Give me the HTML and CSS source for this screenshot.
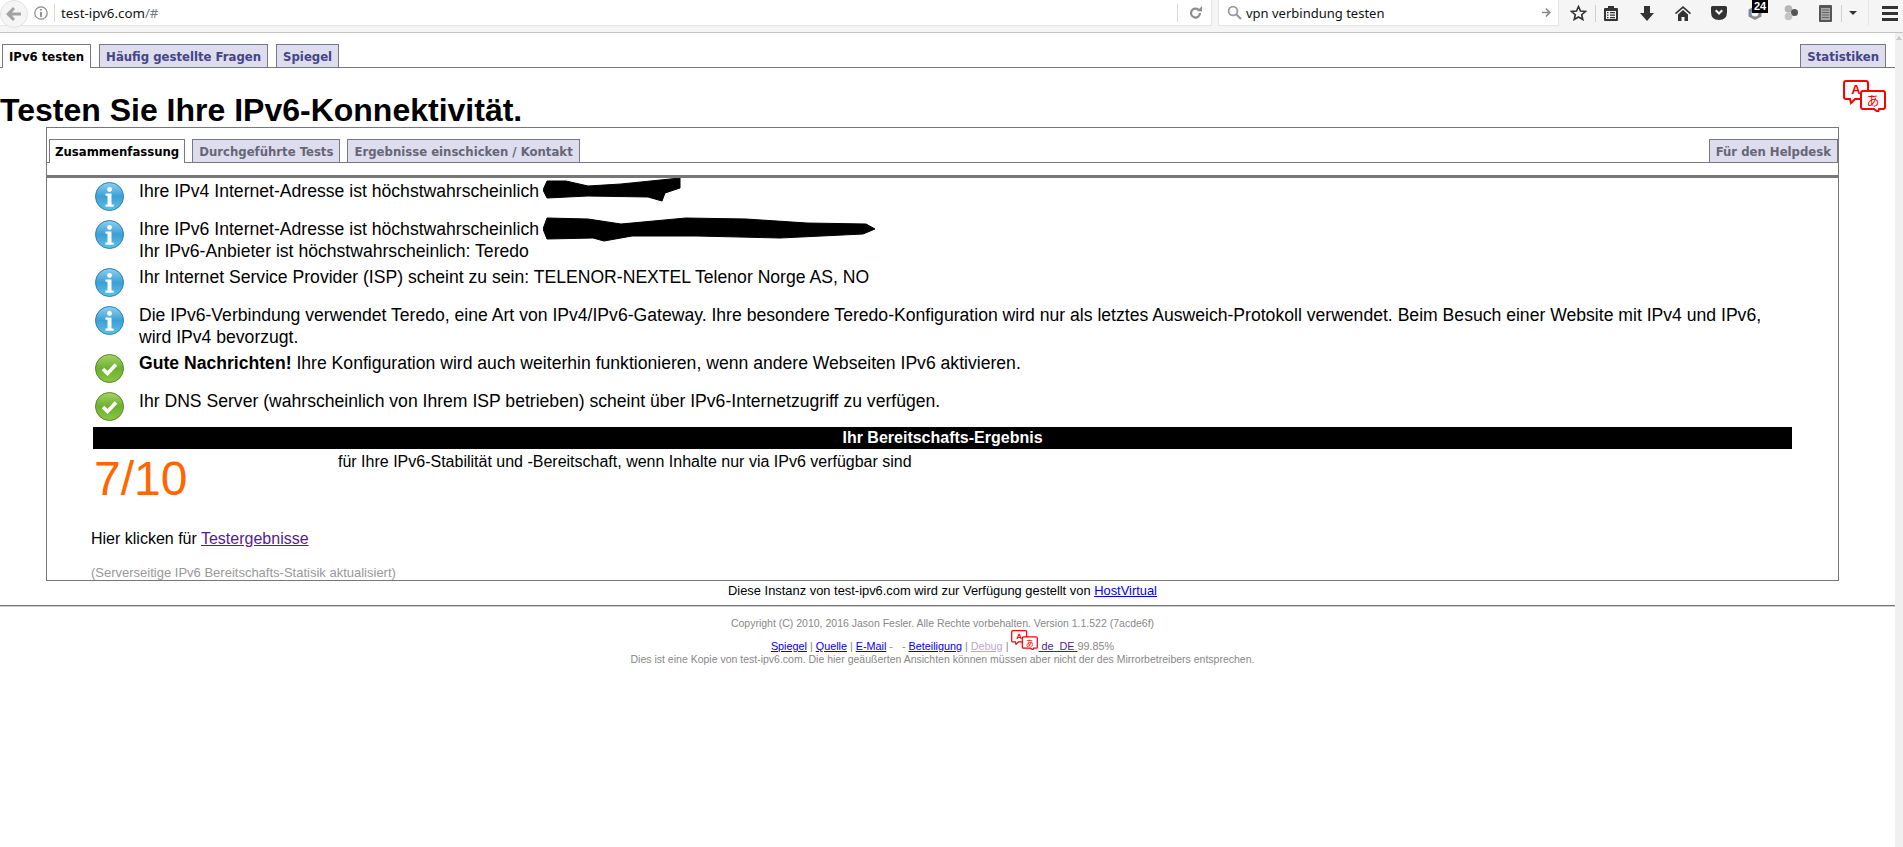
FILE: index.html
```html
<!DOCTYPE html>
<html lang="de">

<head>
    <meta charset="UTF-8">
    <title>Test your IPv6 connectivity.</title>
    <link rel="stylesheet" href="styles.css">
</head>

<body>
    <svg class="defs" width="0" height="0">
        <defs>
            <linearGradient id="blueFill" x1="0" y1="0" x2="0" y2="1">
                <stop offset="0" stop-color="#8fd0ef" />
                <stop offset="0.5" stop-color="#3ba0d6" />
                <stop offset="1" stop-color="#5fc0ea" />
            </linearGradient>
            <linearGradient id="greenFill" x1="0" y1="0" x2="0" y2="1">
                <stop offset="0" stop-color="#a6d468" />
                <stop offset="0.5" stop-color="#6db02f" />
                <stop offset="1" stop-color="#8cc63f" />
            </linearGradient>
            <symbol id="iconInfo" viewBox="0 0 29 29">
                <circle cx="14.5" cy="14.5" r="14" fill="url(#blueFill)" stroke="#2b7fae" />
                <circle cx="14.5" cy="7.5" r="2.4" fill="#fff" />
                <path d="M10.5 11.5h6v11h2.2v2.2H10.5v-2.2h2v-8.8h-2z" fill="#fff" />
            </symbol>
            <symbol id="iconOk" viewBox="0 0 29 29">
                <circle cx="14.5" cy="14.5" r="14" fill="url(#greenFill)" stroke="#55892a" />
                <path d="M8 15l4.5 4.5L21 10.5" fill="none" stroke="#fff" stroke-width="3.6" />
            </symbol>
            <symbol id="iconLang" viewBox="0 0 43 32">
                <path d="M3 1h20q2 0 2 2v14q0 2-2 2H12l-4 4-1-4H3q-2 0-2-2V3q0-2 2-2z" fill="#fff" stroke="#f00" stroke-width="2" />
                <text x="13" y="14" class="lang-a">A</text>
                <path d="M20 11h20q2 0 2 2v14q0 2-2 2h-4l-1 3-4-3H20q-2 0-2-2V13q0-2 2-2z" fill="#fff" stroke="#f00" stroke-width="2" />
                <text x="30" y="25" class="lang-b">あ</text>
            </symbol>
        </defs>
    </svg>

    <div class="toolbar">
        <div class="urlbar">
            <span class="backbtn">
                <svg width="16" height="14" viewBox="0 0 16 14">
                    <path d="M7 0l2 2-3 3.5h9v3H6L9 12l-2 2-7-7z" fill="#a3a3a3" />
                </svg>
            </span>
            <svg class="infobtn" width="14" height="14" viewBox="0 0 14 14">
                <circle cx="7" cy="7" r="6.2" fill="none" stroke="#8a8a8a" stroke-width="1.2" />
                <path d="M6.2 3h1.6v1.6H6.2zM6.2 6h1.6v5H6.2z" fill="#777" />
            </svg>
            <span class="urltext">test-ipv6.com<span class="urlrest">/#</span></span>
            <span class="reload">
                <svg width="14" height="14" viewBox="0 0 14 14">
                    <path d="M11 7a4.5 4.5 0 1 1-1.5-3.3" fill="none" stroke="#8c8c8c" stroke-width="2.2" />
                    <path d="M8 5l5 .5V0z" fill="#8c8c8c" />
                </svg>
            </span>
        </div>
        <div class="searchbar">
            <svg width="15" height="15" viewBox="0 0 15 15">
                <circle cx="6" cy="6" r="4.4" fill="none" stroke="#9a9a9a" stroke-width="1.8" />
                <path d="M9.5 9.5l4.5 4.5" stroke="#9a9a9a" stroke-width="2.2" />
            </svg>
            <span class="searchtext">vpn verbindung testen</span>
            <svg width="9" height="9" viewBox="0 0 9 9">
                <path d="M4.5 0l4.5 4.5L4.5 9 3.4 7.9 5.8 5.3H0V3.7h5.8L3.4 1.1z" fill="#8c8c8c" />
            </svg>
        </div>
        <div class="tools">
            <span class="tool tool-star">
                <svg width="17" height="16" viewBox="0 0 17 16">
                    <path d="M8.5 1.5l2 4.5 4.9.5-3.7 3.2 1.1 4.8-4.3-2.5-4.3 2.5 1.1-4.8L1.6 6.5 6.500 6z" fill="none" stroke="#333" stroke-width="1.6" />
                </svg>
            </span>
            <span class="toolsep"></span>
            <span class="tool tool-list">
                <svg width="14" height="15" viewBox="0 0 14 15">
                    <path d="M1 2h3V0h6v2h3q1 0 1 1v11q0 1-1 1H1q-1 0-1-1V3q0-1 1-1zm1 3v8h10V5zm1 1h1.500v1.300H3zm3 0h5v1.300H6zM3 8.500h1.500v1.300H3zm3 0h5v1.300H6zM3 11h1.500v1.300H3zm3 0h5v1.300H6z" fill="#333" fill-rule="evenodd" />
                </svg>
            </span>
            <span class="tool">
                <svg width="14" height="15" viewBox="0 0 14 15">
                    <path d="M4 0h6v7h4l-7 8-7-8h4z" fill="#333" />
                </svg>
            </span>
            <span class="tool">
                <svg width="16" height="15" viewBox="0 0 16 15">
                    <path d="M8 0l8 7-1 1.300-7-6-7 6L0 7zM8 4l5 4.500V15H9.500v-4h-3v4H3V8.500z" fill="#333" />
                </svg>
            </span>
            <span class="tool">
                <svg width="16" height="14" viewBox="0 0 16 14">
                    <path d="M1.500 0h13Q16 0 16 1.500V6q0 8-8 8T0 6V1.500Q0 0 1.500 0zM4 5l4 4 4-4-1.500-1.500L8 6 5.500 3.500z" fill="#333" fill-rule="evenodd" />
                </svg>
            </span>
            <span class="tool tool-sync">
                <svg width="16" height="16" viewBox="0 0 16 16">
                    <path d="M8 1l6.500 3.500v7L8 15l-6.500-3.500v-7z" fill="#8a8a8a" />
                    <circle cx="8" cy="8" r="3.500" fill="#f5f5f5" />
                    <path d="M3 9a5 5 0 0 1 5-5" fill="none" stroke="#3d9bd0" stroke-width="1.500" />
                </svg>
                <span class="badge">24</span>
            </span>
            <span class="tool">
                <svg width="14" height="16" viewBox="0 0 14 16">
                    <circle cx="4.500" cy="4" r="3.800" fill="#b5b5b5" />
                    <circle cx="10.500" cy="7.500" r="3.500" fill="#555" />
                    <circle cx="4.500" cy="11.500" r="3.800" fill="#c4c4c4" />
                </svg>
            </span>
            <span class="tool tool-phone">
                <svg width="13" height="17" viewBox="0 0 13 17">
                    <rect width="13" height="17" rx="1" fill="#555" />
                    <rect x="2" y="3" width="9" height="12" fill="#a8a8a8" />
                    <path d="M3 5h7M3 7.500h7M3 10h7M3 12.500h7" stroke="#666" />
                </svg>
            </span>
            <span class="toolsep"></span>
            <span class="tool tool-drop"><span class="caret"></span></span>
            <span class="toolsep toolsep-light"></span>
            <span class="burger">
                <span></span><span></span><span></span>
            </span>
        </div>
    </div>

    <div class="page">
        <div class="content">
            <div class="tabbar">
                <a class="tab tab-on">IPv6 testen</a>
                <a class="tab">Häufig gestellte Fragen</a>
                <a class="tab">Spiegel</a>
                <a class="tab tab-end">Statistiken</a>
            </div>

            <div class="headrow">
                <h1>Testen Sie Ihre IPv6-Konnektivität.</h1>
                <svg class="langbig" width="43" height="32"><use href="#iconLang" /></svg>
            </div>

            <div class="mainbox">
                <div class="tabbar tabbar-inner">
                    <a class="tab tab-on">Zusammenfassung</a>
                    <a class="tab">Durchgeführte Tests</a>
                    <a class="tab">Ergebnisse einschicken / Kontakt</a>
                    <a class="tab tab-end">Für den Helpdesk</a>
                </div>
                <div class="rule"></div>

                <div class="msg">
                    <svg class="msgicon" width="29" height="29"><use href="#iconInfo" /></svg>
                    <div>Ihre IPv4 Internet-Adresse ist höchstwahrscheinlich <span class="redact">
                        <svg class="blob" width="138" height="24" viewBox="0 0 138 24">
                            <path d="M4 3L23 3 45 8 78 6 137 0 137 10 122 15 119 23 105 19 45 18 4 20 0 12z" fill="#000" stroke="#000" stroke-linejoin="round" />
                        </svg></span></div>
                </div>
                <div class="msg">
                    <svg class="msgicon" width="29" height="29"><use href="#iconInfo" /></svg>
                    <div>Ihre IPv6 Internet-Adresse ist höchstwahrscheinlich <span class="redact">
                        <svg class="blob" width="333" height="26" viewBox="0 0 333 26">
                            <path d="M4 2L45 3 78 8 143 2 203 3 264 7 323 8 332 13 320 18 237 22 154 20 89 20 61 25 50 22 4 23 0 13z" fill="#000" stroke="#000" stroke-linejoin="round" />
                        </svg></span><br>Ihr IPv6-Anbieter ist höchstwahrscheinlich: Teredo</div>
                </div>
                <div class="msg">
                    <svg class="msgicon" width="29" height="29"><use href="#iconInfo" /></svg>
                    <div>Ihr Internet Service Provider (ISP) scheint zu sein: TELENOR-NEXTEL Telenor Norge AS, NO</div>
                </div>
                <div class="msg">
                    <svg class="msgicon" width="29" height="29"><use href="#iconInfo" /></svg>
                    <div>Die IPv6-Verbindung verwendet Teredo, eine Art von IPv4/IPv6-Gateway. Ihre besondere Teredo-Konfiguration wird nur als letztes Ausweich-Protokoll verwendet. Beim Besuch einer Website mit IPv4 und IPv6, wird IPv4 bevorzugt.</div>
                </div>
                <div class="msg">
                    <svg class="msgicon" width="29" height="29"><use href="#iconOk" /></svg>
                    <div><b>Gute Nachrichten!</b> Ihre Konfiguration wird auch weiterhin funktionieren, wenn andere Webseiten IPv6 aktivieren.</div>
                </div>
                <div class="msg">
                    <svg class="msgicon" width="29" height="29"><use href="#iconOk" /></svg>
                    <div>Ihr DNS Server (wahrscheinlich von Ihrem ISP betrieben) scheint über IPv6-Internetzugriff zu verfügen.</div>
                </div>

                <div class="scorebar">Ihr Bereitschafts-Ergebnis</div>
                <div class="scorerow">
                    <div class="score">7/10</div>
                    <div class="scoretext">für Ihre IPv6-Stabilität und -Bereitschaft, wenn Inhalte nur via IPv6 verfügbar sind</div>
                </div>
                <p class="clickline">Hier klicken für <a class="visited" href="#">Testergebnisse</a></p>
                <p class="statline">(Serverseitige IPv6 Bereitschafts-Statisik aktualisiert)</p>
            </div>

            <div class="sponsor">Diese Instanz von test-ipv6.com wird zur Verfügung gestellt von <a href="#">HostVirtual</a></div>
            <hr class="foothr">

            <div class="footer">
                <div class="copy">Copyright (C) 2010, 2016 Jason Fesler. Alle Rechte vorbehalten. Version 1.1.522 (7acde6f)</div>
                <div class="footlinks">
                    <a href="#">Spiegel</a> | <a href="#">Quelle</a> | <a href="#">E-Mail</a> - &nbsp; - <a href="#">Beteiligung</a> | <a class="faded" href="#">Debug</a> |
                    <svg class="langsmall" width="27" height="20"><use href="#iconLang" /></svg><a class="visited" href="#">&nbsp;de_DE&nbsp;</a>99.85%
                </div>
                <div class="disclaimer">Dies ist eine Kopie von test-ipv6.com. Die hier geäußerten Ansichten können müssen aber nicht der des Mirrorbetreibers entsprechen.</div>
            </div>
        </div>

        <div class="scrollbar">
            <span class="scrollup"></span>
        </div>
    </div>
</body>

</html>
```

FILE: styles.css
```css
html,
body {
    margin: 0;
    padding: 0;
    height: 847px;
    overflow: hidden;
    background: #fff;
    color: #000;
    font-family: "Liberation Sans", Arial, sans-serif;
}

.defs {
    position: absolute;
}

.lang-a {
    font-family: "Liberation Sans", sans-serif;
    font-size: 13px;
    font-weight: bold;
    fill: #f00;
    text-anchor: middle;
}

.lang-b {
    font-family: "Noto Sans CJK JP", sans-serif;
    font-size: 13px;
    fill: #f00;
    text-anchor: middle;
}

/* browser chrome */
.toolbar {
    display: flex;
    height: 32px;
    background: #f5f5f5;
    border-bottom: 1px solid #c4c4c4;
    box-sizing: content-box;
}

.urlbar {
    display: flex;
    align-items: center;
    width: 1212px;
    height: 26px;
    background: #fff;
    border-bottom: 1px solid #e4e4e4;
    border-right: 1px solid #e4e4e4;
    box-sizing: border-box;
}

.backbtn {
    display: flex;
    align-items: center;
    justify-content: center;
    width: 28px;
    height: 28px;
    margin-top: 2px;
    border-radius: 50%;
    background: #f5f5f5;
    border: 1px solid #e2e2e2;
    box-sizing: border-box;
    flex: none;
}

.infobtn {
    margin-left: 6px;
}

.urltext {
    margin-left: 6px;
    padding-left: 6px;
    border-left: 1px solid #d8d8d8;
    font-family: "Noto Sans", sans-serif;
    font-size: 13.3px;
    line-height: 18px;
    color: #111;
}

.urlrest {
    color: #777;
}

.reload {
    display: flex;
    align-items: center;
    margin-left: auto;
    width: 34px;
    height: 18px;
    padding-left: 11px;
    border-left: 1px solid #d8d8d8;
    box-sizing: border-box;
}

.searchbar {
    display: flex;
    align-items: center;
    width: 341px;
    height: 26px;
    margin-left: 6px;
    padding: 0 7px 0 8px;
    background: #fff;
    border: 1px solid #e4e4e4;
    border-top: 0;
    box-sizing: border-box;
}

.searchtext {
    flex: 1;
    margin-left: 4px;
    font-family: "Noto Sans", sans-serif;
    font-size: 13px;
    color: #111;
}

.tools {
    display: flex;
    align-items: center;
    height: 26px;
    margin-left: 3px;
}

.tool {
    position: relative;
    display: flex;
    align-items: center;
    justify-content: center;
    width: 36px;
}

.tool-star {
    width: 33px;
}

.tool-list {
    width: 30px;
    margin-right: 3px;
}

.tool-phone {
    width: 32px;
}

.tool-drop {
    width: 22px;
}

.toolsep {
    width: 1px;
    height: 17px;
    background: #cfcfcf;
}

.toolsep-light {
    height: 26px;
    margin-left: 4px;
    background: #e6e6e6;
}

.caret {
    width: 0;
    height: 0;
    border-left: 4px solid transparent;
    border-right: 4px solid transparent;
    border-top: 4px solid #333;
}

.badge {
    position: absolute;
    left: 15px;
    top: -6px;
    width: 16px;
    height: 14px;
    background: #000;
    color: #fff;
    font-size: 11px;
    font-weight: bold;
    line-height: 14px;
    text-align: center;
}

.burger {
    display: flex;
    flex-direction: column;
    gap: 3px;
    width: 16px;
    margin-left: 13px;
}

.burger span {
    height: 3px;
    background: #333;
}

/* page */
.page {
    display: flex;
    height: 814px;
}

.content {
    width: 1895px;
    flex: none;
}

.scrollbar {
    width: 8px;
    background: #f0f0f0;
}

.scrollup {
    display: block;
    width: 0;
    margin: 3px auto 0;
    border-left: 3px solid transparent;
    border-right: 3px solid transparent;
    border-bottom: 4px solid #c8c8c8;
}

.tabbar {
    display: flex;
    gap: 8px;
    height: 23px;
    margin-top: 11px;
    padding-left: 2px;
    padding-right: 9px;
    border-bottom: 1px solid #778;
}

.tab {
    height: 23px;
    padding: 0 6px;
    background: #dde;
    border: 1px solid #778;
    border-bottom: 0;
    box-sizing: border-box;
    font-family: "DejaVu Sans", sans-serif;
    font-stretch: condensed;
    font-size: 13px;
    font-weight: bold;
    line-height: 23px;
    color: #448;
}

.tab-on {
    height: 24px;
    background: #fff;
    color: #000;
}

.tab-end {
    margin-left: auto;
}

.headrow {
    display: flex;
    justify-content: space-between;
    height: 59px;
}

h1 {
    margin: 24px 0 0;
    font-size: 32px;
    font-weight: bold;
    line-height: 37px;
}

.langbig {
    margin: 12px 9px 0 0;
}

.mainbox {
    width: 1793px;
    height: 454px;
    margin-left: 46px;
    border: 1px solid #777;
    box-sizing: border-box;
}

.tabbar-inner {
    margin-top: 11px;
    padding-right: 0;
    gap: 7px;
}

.tabbar-inner .tab {
    color: #667;
}

.tabbar-inner .tab-on {
    padding: 0 5px;
    color: #000;
}

.rule {
    height: 3px;
    margin-top: 12px;
    background: #777;
}

.msg {
    display: flex;
    min-height: 38px;
    padding: 2px 60px 2px 48px;
    box-sizing: border-box;
    font-size: 17.6px;
    line-height: 22px;
}

.msgicon {
    flex: none;
    margin: 2px 15px 0 0;
}

.redact {
    position: relative;
}

.blob {
    position: absolute;
    left: 4px;
    top: -3px;
}

.scorebar {
    height: 22px;
    margin: 1px 46px 0;
    background: #000;
    color: #fff;
    font-size: 16px;
    font-weight: bold;
    line-height: 22px;
    text-align: center;
}

.scorerow {
    display: flex;
    margin-left: 47px;
    padding-top: 2px;
}

.score {
    width: 244px;
    font-size: 48px;
    line-height: 56px;
    color: #f60;
}

.scoretext {
    font-size: 16px;
    line-height: 22px;
}

.clickline {
    margin: 21px 0 0 44px;
    font-size: 16px;
    line-height: 22px;
}

.statline {
    margin: 15px 0 0 44px;
    font-size: 13px;
    line-height: 15px;
    color: #999;
}

a {
    color: #00e;
}

a.visited {
    color: #551a8b;
}

a.faded {
    color: #bba8cc;
}

.sponsor {
    width: 1793px;
    margin-left: 46px;
    margin-top: 2px;
    font-size: 12.9px;
    line-height: 16px;
    text-align: center;
}

.foothr {
    height: 0;
    margin: 6px 0 0;
    border: 0;
    border-top: 1px solid #777;
    border-bottom: 1px solid #ccc;
}

.footer {
    width: 1793px;
    margin-left: 46px;
    font-size: 10.5px;
    text-align: center;
    color: #888;
}

.copy {
    margin-top: 10px;
    line-height: 13px;
}

.footlinks {
    margin-top: 8px;
    font-size: 10.8px;
    line-height: 13px;
    color: #888;
}

.langsmall {
    vertical-align: 0;
    margin-top: -8px;
}

.disclaimer {
    line-height: 13px;
}
```
